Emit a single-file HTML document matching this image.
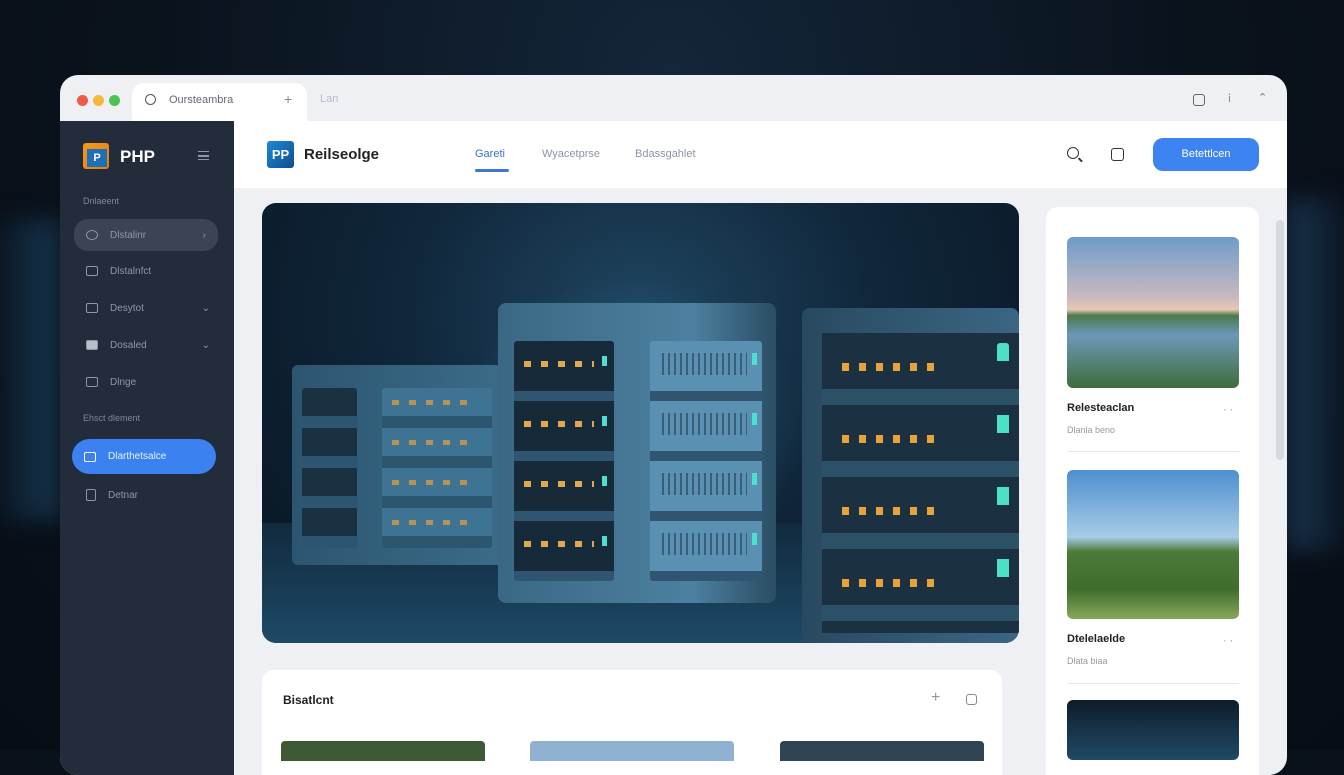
<!DOCTYPE html>
<html><head><style>
*{margin:0;padding:0;box-sizing:border-box}
body{width:1344px;height:750px;overflow:hidden;background:radial-gradient(ellipse at 50% 10%,#14263a 0%,#0a121c 55%,#070d15 100%);font-family:"Liberation Sans",sans-serif;position:relative}
.abs{position:absolute}
.win{left:60px;top:75px;width:1227px;height:700px;background:#eef0f4;border-radius:18px;overflow:hidden}
.t{color:#8a94a6;font-size:11px}
.side{left:0;top:46px;width:174px;height:660px;background:#232c3b}
.si{position:absolute;left:14px;width:144px;height:32px;border-radius:14px;color:#8d97a8;font-size:10px;display:flex;align-items:center;padding-left:12px;gap:12px}
.ic{width:12px;height:10px;border:1.5px solid #8d97a8;border-radius:2px}
.card{background:#fff;border-radius:12px}
.slot{position:absolute;border-radius:3px}
.lt{-webkit-mask:repeating-linear-gradient(90deg,#000 0 7px,transparent 7px 17px)}
</style></head><body>
<div class="abs" style="left:0;top:220px;width:60px;height:300px;background:linear-gradient(90deg,#0c1a28,#173650);filter:blur(12px)"></div>
<div class="abs" style="left:1287px;top:200px;width:57px;height:350px;background:linear-gradient(90deg,#1a3550,#0c1826);filter:blur(12px)"></div>
<div class="abs win">
  <div class="abs" style="left:17px;top:20px;width:11px;height:11px;border-radius:50%;background:#ee5b4b"></div>
  <div class="abs" style="left:33px;top:20px;width:11px;height:11px;border-radius:50%;background:#f5b83a"></div>
  <div class="abs" style="left:49px;top:20px;width:11px;height:11px;border-radius:50%;background:#4cc254"></div>
  <div class="abs" style="left:72px;top:8px;width:175px;height:40px;background:#fff;border-radius:12px 12px 0 0"></div>
  <div class="abs" style="left:85px;top:19px;width:11px;height:11px;border:1.5px solid #555;border-radius:50%"></div>
  <div class="abs t" style="left:109px;top:19px;color:#667">Oursteambra</div>
  <div class="abs t" style="left:224px;top:16px;font-size:14px;color:#889">+</div>
  <div class="abs t" style="left:260px;top:18px;color:#bbc">Lan</div>
  <div class="abs" style="left:1133px;top:19px;width:12px;height:12px;border:1.5px solid #666;border-radius:3px"></div>
  <div class="abs t" style="left:1168px;top:17px;color:#888">ⅰ</div>
  <div class="abs t" style="left:1198px;top:16px;color:#777">⌃</div>
  <div class="abs side">
    <div class="abs" style="left:23px;top:22px;width:26px;height:26px;background:linear-gradient(135deg,#f39a1e,#e27d12);border-radius:3px"></div>
    <div class="abs" style="left:27px;top:28px;width:20px;height:18px;background:#1f6fb6;color:#fff;font-size:11px;font-weight:bold;text-align:center;line-height:18px">P</div>
    <div class="abs" style="left:60px;top:26px;color:#fff;font-size:17px;font-weight:bold">PHP</div>
    <div class="abs" style="left:138px;top:30px;width:11px;height:9px;border-top:1.5px solid #8d97a8;border-bottom:1.5px solid #8d97a8"></div>
    <div class="abs" style="left:138px;top:34px;width:11px;height:1.5px;background:#8d97a8"></div>
    <div class="abs t" style="left:23px;top:75px;font-size:9px;color:#7d8798">Dnlaeent</div>
    <div class="si" style="top:98px;background:#3a4454"><div class="ic" style="border-radius:50%"></div>Dlstalinr<span style="margin-left:auto;margin-right:12px">›</span></div>
    <div class="si" style="top:134px"><div class="ic"></div>Dlstalnfct</div>
    <div class="si" style="top:171px"><div class="ic"></div>Desytot<span style="margin-left:auto;margin-right:8px">⌄</span></div>
    <div class="si" style="top:208px"><div class="ic" style="background:#b9c0cc"></div>Dosaled<span style="margin-left:auto;margin-right:8px">⌄</span></div>
    <div class="si" style="top:245px"><div class="ic"></div>Dlnge</div>
    <div class="abs t" style="left:23px;top:292px;font-size:9px;color:#7d8798">Ehsct dlement</div>
    <div class="si" style="top:318px;left:12px;width:144px;height:35px;border-radius:18px;background:#3b82f0;color:#e8f0ff"><div class="ic" style="border-color:#fff"></div>Dlarthetsalce</div>
    <div class="si" style="top:358px"><div class="ic" style="height:12px;width:10px"></div>Detnar</div>
  </div>
  <div class="abs" style="left:174px;top:46px;width:1053px;height:67px;background:#fff"></div>
  <div class="abs" style="left:207px;top:66px;width:27px;height:27px;background:linear-gradient(135deg,#1e88d8,#0f4f8a);border-radius:3px;color:#fff;font-weight:bold;font-size:13px;text-align:center;line-height:27px">PP</div>
  <div class="abs" style="left:244px;top:71px;font-size:15px;color:#222;font-weight:bold">Reilseolge</div>
  <div class="abs" style="left:415px;top:73px;font-size:11px;color:#3a6fc8">Gareti</div>
  <div class="abs" style="left:415px;top:94px;width:34px;height:3px;background:#3b77d6;border-radius:2px"></div>
  <div class="abs t" style="left:482px;top:73px">Wyacetprse</div>
  <div class="abs t" style="left:575px;top:73px">Bdassgahlet</div>
  <div class="abs" style="left:1007px;top:72px;width:12px;height:12px;border:1.6px solid #333;border-radius:50%"></div>
  <div class="abs" style="left:1018px;top:84px;width:5px;height:1.6px;background:#333;transform:rotate(45deg)"></div>
  <div class="abs" style="left:1051px;top:73px;width:13px;height:13px;border:1.5px solid #333;border-radius:3px"></div>
  <div class="abs" style="left:1093px;top:63px;width:106px;height:33px;background:#3d84f2;border-radius:10px;color:#fff;font-size:11px;text-align:center;line-height:33px">Betettlcen</div>
  <!-- hero -->
  <div class="abs" style="left:202px;top:128px;width:757px;height:440px;border-radius:14px;overflow:hidden;background:radial-gradient(ellipse at 50% 25%,#1f4560 0%,#10263a 45%,#081420 100%)">
    <div class="abs" style="left:0;top:320px;width:757px;height:120px;background:linear-gradient(180deg,#112a3e,#1d4a66)"></div>
    <div class="abs" style="left:180px;top:60px;width:380px;height:330px;background:radial-gradient(ellipse,#2d6c90 0%,transparent 65%);opacity:.6"></div>
    <!-- left rack -->
    <div class="abs" style="left:30px;top:162px;width:210px;height:200px;background:linear-gradient(90deg,#2c5670,#3b6b88);border-radius:6px"></div>
    <div class="slot" style="left:40px;top:185px;width:55px;height:160px;background:repeating-linear-gradient(180deg,#1a3142 0 28px,#2c5670 28px 40px)"></div>
    <div class="slot" style="left:120px;top:185px;width:110px;height:160px;background:repeating-linear-gradient(180deg,#3e7394 0 28px,#2c5670 28px 40px)"></div>
    <div class="abs lt" style="left:130px;top:197px;width:80px;height:140px;background:repeating-linear-gradient(180deg,#d49a48 0 5px,transparent 5px 40px);opacity:.8"></div>
    <!-- center rack -->
    <div class="abs" style="left:236px;top:100px;width:278px;height:300px;background:linear-gradient(90deg,#3a6884,#4d80a0 70%,#2a4d63);border-radius:8px"></div>
    <div class="slot" style="left:252px;top:138px;width:100px;height:240px;background:repeating-linear-gradient(180deg,#162a3a 0 50px,#2f5570 50px 60px)"></div>
    <div class="abs lt" style="left:262px;top:158px;width:70px;height:220px;background:repeating-linear-gradient(180deg,#e3a84a 0 6px,transparent 6px 60px)"></div>
    <div class="abs" style="left:340px;top:153px;width:5px;height:220px;background:repeating-linear-gradient(180deg,#4de0d0 0 10px,transparent 10px 60px)"></div>
    <div class="slot" style="left:388px;top:138px;width:112px;height:240px;background:repeating-linear-gradient(180deg,#5a90b2 0 50px,#2f5570 50px 60px)"></div>
    <div class="abs" style="left:400px;top:150px;width:85px;height:230px;background:repeating-linear-gradient(180deg,#2a4a60 0 22px,transparent 22px 60px);-webkit-mask:repeating-linear-gradient(90deg,#000 0 2px,transparent 2px 6px);opacity:.7"></div>
    <div class="abs" style="left:490px;top:150px;width:5px;height:220px;background:repeating-linear-gradient(180deg,#4de0d0 0 12px,transparent 12px 60px)"></div>
    <!-- right rack -->
    <div class="abs" style="left:540px;top:105px;width:217px;height:335px;background:linear-gradient(90deg,#284a60,#3a6683);border-radius:8px"></div>
    <div class="abs" style="left:560px;top:130px;width:197px;height:300px;background:repeating-linear-gradient(180deg,#1b3040 0 56px,#2c5268 56px 72px)"></div>
    <div class="abs lt" style="left:580px;top:160px;width:100px;height:250px;background:repeating-linear-gradient(180deg,#e8a43a 0 8px,transparent 8px 72px)"></div>
    <div class="abs" style="left:735px;top:140px;width:12px;height:260px;background:repeating-linear-gradient(180deg,#4de0c8 0 18px,transparent 18px 72px);border-radius:3px"></div>
  </div>
  <div class="abs card" style="left:202px;top:595px;width:740px;height:120px"></div>
  <div class="abs" style="left:223px;top:618px;font-size:12px;color:#222;font-weight:bold">Bisatlcnt</div>
  <div class="abs t" style="left:871px;top:614px;font-size:16px">+</div>
  <div class="abs" style="left:906px;top:619px;width:11px;height:11px;border:1.5px solid #888;border-radius:3px"></div>
  <div class="abs" style="left:221px;top:666px;width:204px;height:20px;background:#3e5a34;border-radius:4px 4px 0 0"></div>
  <div class="abs" style="left:470px;top:666px;width:204px;height:20px;background:#8fb0d0;border-radius:4px 4px 0 0"></div>
  <div class="abs" style="left:720px;top:666px;width:204px;height:20px;background:#2f4455;border-radius:4px 4px 0 0"></div>
  <div class="abs card" style="left:986px;top:132px;width:213px;height:600px"></div>
  <div class="abs" style="left:1007px;top:162px;width:172px;height:151px;border-radius:6px;background:linear-gradient(180deg,#6d9cc9 0%,#c9b9c0 40%,#e8c8b0 48%,#4b7a4a 52%,#6c98b8 65%,#3e6d3a 100%)"></div>
  <div class="abs" style="left:1007px;top:327px;font-size:11px;color:#222;font-weight:bold">Relesteaclan</div>
  <div class="abs t" style="left:1163px;top:329px">· ·</div>
  <div class="abs t" style="left:1007px;top:350px;font-size:9px;color:#999">Dlanla beno</div>
  <div class="abs" style="left:1007px;top:376px;width:172px;height:1px;background:#e6e8ec"></div>
  <div class="abs" style="left:1007px;top:395px;width:172px;height:149px;border-radius:6px;background:linear-gradient(180deg,#4d8fd0 0%,#a8cbe6 45%,#4c7a38 55%,#3f6d2c 80%,#88a85a 100%)"></div>
  <div class="abs" style="left:1007px;top:558px;font-size:11px;color:#222;font-weight:bold">Dtelelaelde</div>
  <div class="abs t" style="left:1163px;top:560px">· ·</div>
  <div class="abs t" style="left:1007px;top:581px;font-size:9px;color:#999">Dlata biaa</div>
  <div class="abs" style="left:1007px;top:608px;width:172px;height:1px;background:#e6e8ec"></div>
  <div class="abs" style="left:1007px;top:625px;width:172px;height:60px;border-radius:6px;background:linear-gradient(180deg,#0e1c2a,#1f4a66)"></div>
  <div class="abs" style="left:1216px;top:145px;width:8px;height:240px;background:#d6d9df;border-radius:4px"></div>
</div>
</body></html>
